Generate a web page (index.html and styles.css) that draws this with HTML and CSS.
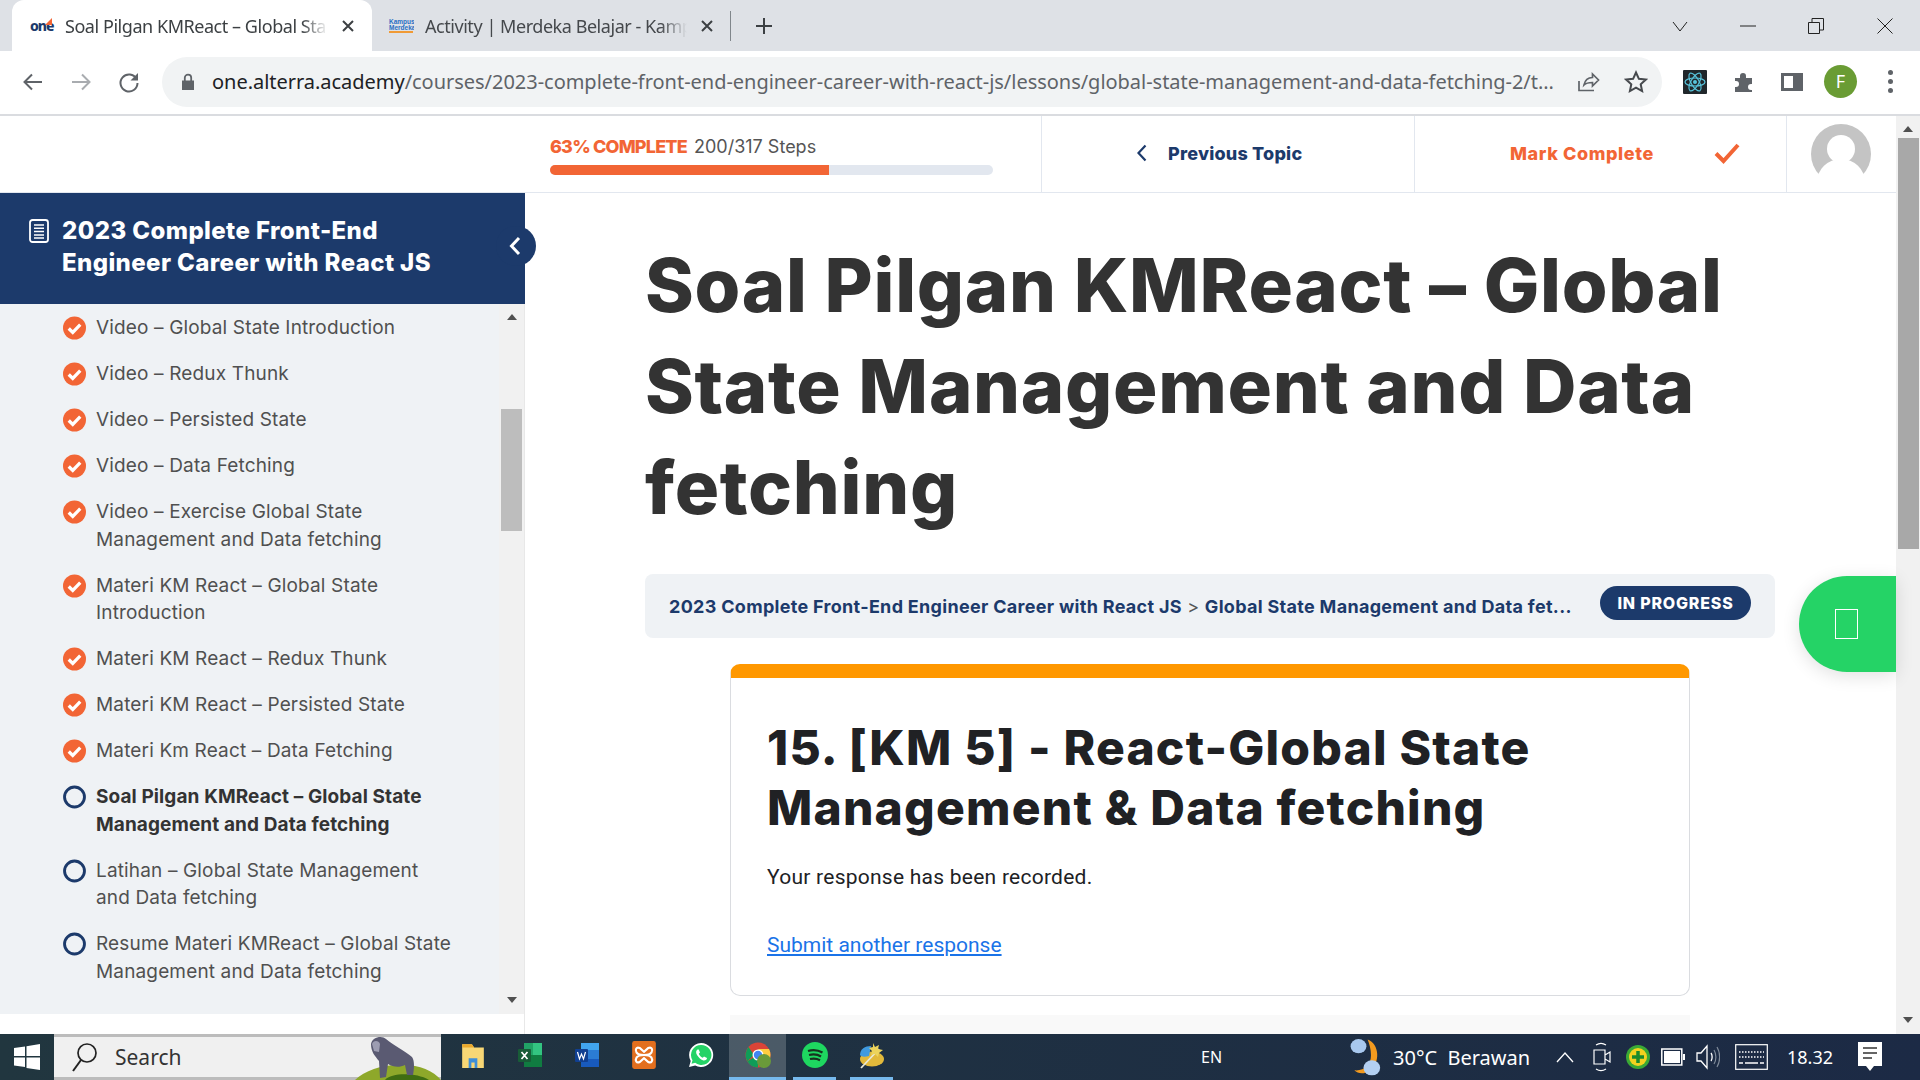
FILE: index.html
```html
<!DOCTYPE html>
<html lang="en">
<head>
<meta charset="UTF-8">
<title>Soal Pilgan KMReact – Global State Management and Data fetching</title>
<link rel="stylesheet" href="styles.css">
</head>
<body>
<svg class="defs" width="0" height="0">
    <symbol id="done" viewBox="0 0 24 24">
        <circle cx="12" cy="12" r="12" fill="#f26535"/>
        <path d="M6 12.500l4.200 4.200L18 8.600" fill="none" stroke="#fff" stroke-width="3.400"/>
    </symbol>
    <symbol id="todo" viewBox="0 0 24 24">
        <circle cx="12" cy="12" r="10.400" fill="none" stroke="#1c3a6b" stroke-width="3"/>
    </symbol>
</svg>

<!-- Browser tabs -->
<div class="tabstrip">
    <div class="tab active">
        <span class="favicon one">one</span>
        <span class="tab-title">Soal Pilgan KMReact – Global Sta</span>
        <svg class="tab-close" viewBox="0 0 12 12"><path d="M1 1l10 10M11 1L1 11"/></svg>
    </div>
    <div class="tab">
        <svg class="favicon-kampus" viewBox="0 0 26 16">
            <text x="1" y="6" class="kampus-text">Kampus</text>
            <text x="1" y="11.500" class="kampus-text">Merdeka</text>
            <rect x="1" y="13" width="24" height="2" fill="#f09a35"/>
        </svg>
        <span class="tab-title">Activity | Merdeka Belajar - Kamp</span>
        <svg class="tab-close" viewBox="0 0 12 12"><path d="M1 1l10 10M11 1L1 11"/></svg>
    </div>
    <div class="tab-sep"></div>
    <svg class="new-tab" viewBox="0 0 18 18"><path d="M9 1v16M1 9h16"/></svg>
    <div class="window-btns">
        <svg viewBox="0 0 16 16" class="win-chevron"><path d="M1 4l7 9 7-9"/></svg>
        <svg viewBox="0 0 16 16" class="win-min"><path d="M0 8h16"/></svg>
        <svg viewBox="0 0 16 16" class="win-restore"><path d="M.5 4.500h11v11H.5zM4 4.500V.5h11.500V12h-4"/></svg>
        <svg viewBox="0 0 16 16" class="win-close"><path d="M.5.5l15 15M15.500.5l-15 15"/></svg>
    </div>
</div>

<!-- Browser toolbar -->
<div class="toolbar">
    <svg class="nav-icon" viewBox="0 0 24 24"><path d="M21 12H4M11 4.500L3.500 12l7.500 7.500" stroke="#5f6368"/></svg>
    <svg class="nav-icon" viewBox="0 0 24 24"><path d="M3 12h17M13 4.500l7.500 7.500-7.500 7.500" stroke="#a9acb0"/></svg>
    <svg class="nav-icon" viewBox="0 0 24 24"><path d="M19.500 9A8.500 8.500 0 1 0 20.500 13" stroke="#5f6368"/><path d="M21 3v7.500h-7.500z" fill="#5f6368" stroke="none"/></svg>
    <div class="omnibox">
        <svg class="lock" viewBox="0 0 14 18"><path d="M1 7.500h12V17H1z" fill="#5f6368"/><path d="M3.800 8V4.800a3.200 3.200 0 0 1 6.400 0V8" fill="none" stroke="#5f6368" stroke-width="1.800"/></svg>
        <div class="url"><span class="host">one.alterra.academy</span>/courses/2023-complete-front-end-engineer-career-with-react-js/lessons/global-state-management-and-data-fetching-2/t...</div>
        <svg class="omni-icon share" viewBox="0 0 24 24"><path d="M3 11v9.500h15M8 15c1-5 4.500-7.500 8.500-7.500V4l6 6-6 6v-3.500C12.500 12.500 10 13 8 15z" fill="none" stroke="#5f6368" stroke-width="1.700"/></svg>
        <svg class="omni-icon" viewBox="0 0 24 24"><path d="M12 2.500l2.900 6.300 6.900.8-5.100 4.700 1.400 6.800-6.100-3.400-6.100 3.400 1.400-6.800L2.200 9.600l6.900-.8z" fill="none" stroke="#46494d" stroke-width="2"/></svg>
    </div>
    <div class="ext-icons">
        <svg class="ext-react" viewBox="0 0 24 24">
            <rect width="24" height="24" rx="1" fill="#20272b"/>
            <g fill="none" stroke="#58c4dc" stroke-width="1.200">
                <ellipse cx="12" cy="12" rx="10" ry="4"/>
                <ellipse cx="12" cy="12" rx="10" ry="4" transform="rotate(60 12 12)"/>
                <ellipse cx="12" cy="12" rx="10" ry="4" transform="rotate(120 12 12)"/>
            </g>
            <circle cx="12" cy="12" r="2" fill="#58c4dc"/>
        </svg>
        <svg class="ext-puzzle" viewBox="0 0 24 24"><path d="M2 8h5V6a3 3 0 0 1 6 0v2h6v6h-1a3 3 0 0 0 0 6h1v2H2v-5h1a3 3 0 0 0 0-6H2z" fill="#5f6368"/></svg>
        <svg class="ext-panel" viewBox="0 0 22 18"><path d="M0 0h22v18H0z" fill="#5f6368"/><path d="M3 3h9v12H3z" fill="#fff"/></svg>
        <div class="profile">F</div>
        <div class="kebab"><i></i><i></i><i></i></div>
    </div>
</div>

<!-- Page -->
<div class="page">
    <div class="page-left">
        <div class="topbar">
            <div class="progress">
                <div class="progress-text"><b>63% COMPLETE</b> 200/317 Steps</div>
                <div class="progress-track"><div class="progress-fill"></div></div>
            </div>
            <div class="prev-topic">
                <svg viewBox="0 0 10 18"><path d="M8.500 1.500L1.500 9l7 7.500"/></svg>
                <span>Previous Topic</span>
            </div>
            <div class="mark-complete">
                <span>Mark Complete</span>
                <svg viewBox="0 0 26 22"><path d="M2 11.500l7.500 7.500L24 3"/></svg>
            </div>
            <div class="avatar-cell">
                <svg viewBox="0 0 60 60">
                    <circle cx="30" cy="30" r="30" fill="#c4c4c4"/>
                    <ellipse cx="30" cy="58" rx="24" ry="23" fill="#fff"/>
                    <circle cx="30" cy="25" r="14" fill="#fff"/>
                </svg>
            </div>
        </div>

        <div class="body-row">
            <aside class="sidebar">
                <div class="course-head">
                    <svg class="course-icon" viewBox="0 0 20 24"><rect x="1" y="1" width="18" height="22" rx="2.500" fill="none" stroke="#fff" stroke-width="1.800"/><path d="M5 6h10M5 9.300h10M5 12.600h10M5 15.900h10M5 19h10" stroke="#fff" stroke-width="1.500"/></svg>
                    <div class="course-title">2023 Complete Front-End Engineer Career with React JS</div>
                    <div class="collapse-btn"><svg viewBox="0 0 12 20"><path d="M10 2L2.500 10l7.500 8"/></svg></div>
                </div>
                <div class="lesson-wrap">
                    <ul class="lessons">
                        <li><svg><use href="#done"/></svg><span>Video – Global State Introduction</span></li>
                        <li><svg><use href="#done"/></svg><span>Video – Redux Thunk</span></li>
                        <li><svg><use href="#done"/></svg><span>Video – Persisted State</span></li>
                        <li><svg><use href="#done"/></svg><span>Video – Data Fetching</span></li>
                        <li><svg><use href="#done"/></svg><span>Video – Exercise Global State Management and Data fetching</span></li>
                        <li><svg><use href="#done"/></svg><span>Materi KM React – Global State Introduction</span></li>
                        <li><svg><use href="#done"/></svg><span>Materi KM React – Redux Thunk</span></li>
                        <li><svg><use href="#done"/></svg><span>Materi KM React – Persisted State</span></li>
                        <li><svg><use href="#done"/></svg><span>Materi Km React – Data Fetching</span></li>
                        <li class="current"><svg><use href="#todo"/></svg><span>Soal Pilgan KMReact – Global State Management and Data fetching</span></li>
                        <li><svg><use href="#todo"/></svg><span>Latihan – Global State Management and Data fetching</span></li>
                        <li><svg><use href="#todo"/></svg><span>Resume Materi KMReact – Global State Management and Data fetching</span></li>
                    </ul>
                    <div class="list-scrollbar">
                        <div class="arrow-up"></div>
                        <div class="list-thumb"></div>
                        <div class="arrow-down"></div>
                    </div>
                </div>
            </aside>

            <main class="content">
                <h1>Soal Pilgan KMReact – Global State Management and Data fetching</h1>
                <div class="crumbs">
                    <div class="crumb-text"><b>2023 Complete Front-End Engineer Career with React JS</b> <i>&gt;</i> <b>Global State Management and Data fet...</b></div>
                    <div class="status-pill">IN PROGRESS</div>
                </div>
                <div class="form-card">
                    <h2>15. [KM 5] - React-Global State Management &amp; Data fetching</h2>
                    <p>Your response has been recorded.</p>
                    <a href="#">Submit another response</a>
                </div>
                <div class="next-card"></div>
            </main>
        </div>

        <div class="float-btn"><div class="tofu"></div></div>
    </div>

    <div class="page-scrollbar">
        <div class="arrow-up"></div>
        <div class="page-thumb"></div>
        <div class="arrow-down"></div>
    </div>
</div>

<!-- Windows taskbar -->
<div class="taskbar">
    <div class="start">
        <svg viewBox="0 0 26 26"><path d="M0 4l11-1.500V12H0zM12.500 2.200L26 0v12H12.500zM0 13.500h11V23L0 21.500zM12.500 13.500H26V26l-13.500-2z" fill="#fff"/></svg>
    </div>
    <div class="searchbox">
        <svg class="search-icon" viewBox="0 0 26 30"><circle cx="15" cy="11" r="9" fill="none" stroke="#222" stroke-width="1.700"/><path d="M9 18L1 29" stroke="#222" stroke-width="2"/></svg>
        <span>Search</span>
        <svg class="gorilla" viewBox="0 0 86 46">
            <path d="M0 46C10 36 30 30 45 31C62 30 78 36 86 46z" fill="#8ea82a"/>
            <path d="M30 46C36 39 60 38 74 46z" fill="#3f6d12"/>
            <path d="M16 10C17 3 27 1 31 5C38 11 50 17 57 23C60 27 59 36 58 41L52 41L50 31C44 34 38 33 33 30L31 43L25 44L24 27C20 22 16 18 16 10z" fill="#5a5a72"/>
            <path d="M17 10C18 6 24 6 25 10L24 18L19 17z" fill="#9d9db2"/>
        </svg>
    </div>
    <div class="task-icons">
        <div class="task-item">
            <svg viewBox="0 0 24 24"><path d="M2 2h9l2 3h9v19H2z" fill="#f8d775"/><path d="M2 2h9l2 3H2z" fill="#eaa82c"/><path d="M8 24v-9h8v9h-2.500v-5h-3v5z" fill="#3f8fd8"/></svg>
        </div>
        <div class="task-item">
            <svg viewBox="0 0 26 26"><path d="M7 1h18v24H7z" fill="#21a366"/><path d="M16 1h9v12h-9z" fill="#33c481"/><path d="M7 13h18v12H7z" fill="#107c41"/><rect x="1" y="7" width="13" height="13" rx="1" fill="#185c37"/><path d="M4.500 10l6 7M10.500 10l-6 7" stroke="#fff" stroke-width="1.700"/></svg>
        </div>
        <div class="task-item">
            <svg viewBox="0 0 26 26"><path d="M7 1h18v24H7z" fill="#2b7cd3"/><path d="M7 1h18v7H7z" fill="#41a5ee"/><path d="M7 17h18v8H7z" fill="#185abd"/><rect x="1" y="7" width="13" height="13" rx="1" fill="#103f91"/><path d="M3.500 10l2 7 2-5 2 5 2-7" fill="none" stroke="#fff" stroke-width="1.200"/></svg>
        </div>
        <div class="task-item">
            <svg viewBox="0 0 24 26"><rect x="1" y="0" width="22" height="26" rx="2" fill="#e36f1e"/><path d="M12 10L8 6.500C5 5 3.500 8 5 10.500 6 12 8 13 12 13s6 1 7 2.500c1.500 2.500 0 5.500-3 4L12 16l-4 3.500c-3 1.500-4.500-1.500-3-4C6 14 8 13 12 13s6-1 7-2.500C20.500 8 19 5 16 6.500z" fill="none" stroke="#fff" stroke-width="2"/></svg>
        </div>
        <div class="task-item">
            <svg viewBox="0 0 26 26"><path d="M13 1a12 12 0 0 0-10.300 18L1 25l6.200-1.600A12 12 0 1 0 13 1z" fill="#fff"/><path d="M13 3a10 10 0 0 0-8.500 15.200l-1 3.600 3.700-1A10 10 0 1 0 13 3z" fill="#25d366"/><path d="M9.500 7.500c-1.500 1-2 3-.5 5.500s4 5 6.500 5.500c2 .2 3.500-1 3.500-2.500l-3-1.500-1.200 1.300c-1.500-.5-3.500-2.500-4-4l1.200-1.200-1.300-3z" fill="#fff"/></svg>
        </div>
        <div class="task-item running selected">
            <svg viewBox="0 0 26 26"><circle cx="13" cy="13" r="12.500" fill="#db4437"/><path d="M13 13L2.200 19.300A12.500 12.500 0 0 0 13 25.500z" fill="#0f9d58"/><path d="M2.200 19.300A12.500 12.500 0 0 1 3.500 5L9 13z" fill="#0f9d58"/><path d="M13 7h11a12.500 12.500 0 0 1-8 18L19 13z" fill="#ffcd40"/><circle cx="13" cy="13" r="5.500" fill="#fff"/><circle cx="13" cy="13" r="4.200" fill="#4285f4"/><circle cx="19" cy="19" r="7" fill="#6a9a3a"/></svg>
        </div>
        <div class="task-item running">
            <svg viewBox="0 0 26 26"><circle cx="13" cy="13" r="13" fill="#1ed760"/><path d="M6 9c5-1.500 10-1 14.500 1.500M7 13c4-1 8.500-.7 12 1.500M8 17c3.500-.8 7-.5 10 1.200" fill="none" stroke="#17331f" stroke-width="2.200"/></svg>
        </div>
        <div class="task-item running">
            <svg viewBox="0 0 26 28"><ellipse cx="13" cy="18" rx="12" ry="7.500" fill="#e2b93b"/><path d="M1 14C1 8 6 5 12 5L10 15C6 16 2 16 1 14z" fill="#3f9ae0"/><path d="M2 27L20 8" stroke="#e8e8d8" stroke-width="1.800"/><path d="M14 2l2 4 4-2-1 4 5 1-4 3-1 4-3-3-4 1 1-4-3-3 4-1z" fill="#ecd35c"/></svg>
        </div>
    </div>
    <div class="lang">EN</div>
    <div class="tray">
        <svg class="weather" viewBox="0 0 38 48"><path d="M21 3c14 5 16 28 2 38-7 4-14 3-18-1 12 1 20-6 20-18 0-7-2-14-4-19z" fill="#f39a1f"/><ellipse cx="10" cy="11" rx="9.500" ry="8.500" fill="#a8c8ee"/><ellipse cx="26" cy="37" rx="10" ry="9" fill="#b4d0f2"/></svg>
        <div class="weather-text">30°C&nbsp; Berawan</div>
        <svg class="tray-chevron" viewBox="0 0 18 12"><path d="M1 11l8-9 8 9"/></svg>
        <svg class="tray-cam" viewBox="0 0 18 32"><path d="M1 9h11v14H1zM12 14l5-3v10l-5-3zM3 4c3-2 7-2 10 0M3 28c3 2 7 2 10 0"/></svg>
        <svg class="tray-360" viewBox="0 0 24 24"><circle cx="12" cy="12" r="12" fill="#3aa935"/><circle cx="12" cy="12" r="9" fill="#f3d21f"/><path d="M12 6v12M6 12h12" stroke="#1b8a2c" stroke-width="3.500"/></svg>
        <svg class="tray-battery" viewBox="0 0 24 18"><path d="M.8 1h20v16H.8z" fill="none" stroke="#fff" stroke-width="1.500"/><path d="M3 3h16v12H3z" fill="#fff"/><path d="M22 6h2v6h-2z" fill="#fff"/></svg>
        <svg class="tray-volume" viewBox="0 0 24 26"><path d="M1 9h4l6-7v22l-6-7H1zM15 9c1.500 2 1.500 6 0 8" fill="none" stroke="#fff" stroke-width="1.300"/><path d="M18 6c2.500 4 2.500 10 0 14M21 3c3.500 6 3.500 14 0 20" fill="none" stroke="#7f8a99" stroke-width="1.200"/></svg>
        <svg class="tray-keyboard" viewBox="0 0 33 26"><rect x=".7" y=".7" width="31.600" height="24.600" fill="none" stroke="#fff" stroke-width="1.200"/><path d="M4 8h25M4 13h25" stroke="#fff" stroke-width="1.500" stroke-dasharray="1.500 1.500"/><path d="M4 19h4M10 19h13M25 19h4" stroke="#fff" stroke-width="1.500"/></svg>
        <div class="clock">18.32</div>
        <svg class="tray-notif" viewBox="0 0 24 30"><path d="M0 0h24v24h-8l-4 5-4-5H0z" fill="#fff"/><path d="M5 6h14M5 11h14M5 16h9" stroke="#333" stroke-width="1.300"/></svg>
    </div>
</div>
</body>
</html>
```

FILE: styles.css
```css
* {
    box-sizing: border-box;
}
html, body {
    height: 100%;
}
body {
    margin: 0;
    height: 1080px;
    overflow: hidden;
    display: flex;
    flex-direction: column;
    font-family: "Inter", "Liberation Sans", sans-serif;
    background-color: #fff;
    color: #333;
}
.defs {
    position: absolute;
}

/* Browser tabs */
.tabstrip {
    height: 51px;
    flex: none;
    display: flex;
    align-items: center;
    padding-left: 12px;
    background-color: #dee1e6;
    font-family: "Noto Sans", sans-serif;
    font-size: 18px;
    color: #45484c;
}
.tab {
    width: 360px;
    height: 51px;
    display: flex;
    align-items: center;
    padding-left: 18px;
}
.tab + .tab {
    padding-left: 16px;
    width: 354px;
}
.tab + .tab .tab-close {
    margin-right: 13px;
}
.tab.active {
    background-color: #fff;
    border-radius: 12px 12px 0 0;
    color: #3c4043;
}
.favicon {
    width: 24px;
    flex: none;
}
.favicon.one {
    position: relative;
    font-size: 14px;
    font-weight: 800;
    letter-spacing: -1px;
    color: #1c3a6b;
}
.favicon.one::after {
    content: "";
    position: absolute;
    right: 2px;
    top: 2px;
    border-left: 7px solid transparent;
    border-bottom: 7px solid #f26535;
}
.favicon-kampus {
    width: 26px;
    height: 16px;
    flex: none;
}
.kampus-text {
    font-family: "Liberation Sans", sans-serif;
    font-size: 6.500px;
    font-weight: 700;
    fill: #2a6fc4;
}
.tab-title {
    margin-left: 11px;
    flex: 1;
    min-width: 0;
    white-space: nowrap;
    letter-spacing: -0.45px;
    -webkit-mask-image: linear-gradient(to right, #000 90%, transparent 100%);
    mask-image: linear-gradient(to right, #000 90%, transparent 100%);
}
.tab-close {
    width: 12px;
    height: 12px;
    flex: none;
    margin: 0 18px 0 14px;
    fill: none;
    stroke: #3c4043;
    stroke-width: 2;
}
.tab-sep {
    width: 1px;
    height: 30px;
    background-color: #80868b;
    margin-left: 4px;
}
.new-tab {
    width: 18px;
    height: 18px;
    margin-left: 24px;
    fill: none;
    stroke: #3c4043;
    stroke-width: 2;
}
.window-btns {
    margin-left: auto;
    display: flex;
    align-items: center;
    fill: none;
    stroke: #222;
    stroke-width: 1;
}
.window-btns svg {
    width: 16px;
    height: 16px;
}
.win-chevron {
    margin-right: 52px;
}
.win-min {
    margin-right: 52px;
}
.win-restore {
    margin-right: 53px;
}
.win-close {
    margin-right: 27px;
}

/* Browser toolbar */
.toolbar {
    height: 65px;
    flex: none;
    display: flex;
    align-items: center;
    padding: 0 0 2px 21px;
    border-bottom: 2px solid #dadce0;
}
.nav-icon {
    width: 24px;
    height: 24px;
    margin-right: 24px;
    fill: none;
    stroke-width: 2;
}
.omnibox {
    width: 1500px;
    height: 50px;
    margin-left: -3px;
    display: flex;
    align-items: center;
    padding: 0 14px 0 19px;
    background-color: #f1f3f4;
    border-radius: 25px;
}
.lock {
    width: 14px;
    height: 18px;
    flex: none;
}
.url {
    margin-left: 17px;
    flex: 1;
    min-width: 0;
    white-space: nowrap;
    font-family: "Noto Sans", sans-serif;
    font-size: 20px;
    letter-spacing: -0.03px;
    color: #5f6368;
}
.host {
    color: #202124;
}
.omni-icon {
    width: 24px;
    height: 24px;
    flex: none;
    margin-left: 24px;
}
.omni-icon.share {
    margin-left: 16px;
}
.ext-icons {
    display: flex;
    align-items: center;
    margin-left: 21px;
}
.ext-react {
    width: 24px;
    height: 24px;
}
.ext-puzzle {
    width: 24px;
    height: 24px;
    margin-left: 26px;
}
.ext-panel {
    width: 22px;
    height: 18px;
    margin-left: 24px;
}
.profile {
    width: 33px;
    height: 33px;
    margin-left: 21px;
    border-radius: 50%;
    background-color: #6a9c34;
    color: #fff;
    font-family: "Noto Sans", sans-serif;
    font-size: 18px;
    line-height: 33px;
    text-align: center;
}
.kebab {
    margin-left: 31px;
    display: flex;
    flex-direction: column;
    gap: 4px;
}
.kebab i {
    width: 5px;
    height: 5px;
    border-radius: 50%;
    background-color: #5f6368;
}

/* Page */
.page {
    flex: 1;
    min-height: 0;
    display: flex;
}
.page-left {
    flex: 1;
    min-width: 0;
    position: relative;
    display: flex;
    flex-direction: column;
}
.topbar {
    height: 77px;
    flex: none;
    display: flex;
    padding-left: 550px;
    border-bottom: 1px solid #e2e7ef;
}
.progress {
    width: 491px;
    padding-top: 20px;
}
.progress-text {
    font-size: 18px;
    line-height: 22px;
    color: #555;
}
.progress-text b {
    color: #f26535;
    font-weight: 800;
    letter-spacing: -0.8px;
    margin-right: 2px;
}
.progress-track {
    width: 443px;
    height: 10px;
    margin-top: 7px;
    background-color: #e2e7ef;
    border-radius: 5px;
    overflow: hidden;
}
.progress-fill {
    width: 63%;
    height: 100%;
    background-color: #f26535;
}
.prev-topic {
    width: 373px;
    display: flex;
    align-items: center;
    padding: 0 0 2px 95px;
    border-left: 1px solid #e2e7ef;
    color: #1c3a6b;
    font-size: 18px;
    font-weight: 800;
    letter-spacing: 0.2px;
}
.prev-topic svg {
    width: 10px;
    height: 18px;
    margin-right: 21px;
    fill: none;
    stroke: #1c3a6b;
    stroke-width: 2.200;
}
.mark-complete {
    width: 372px;
    display: flex;
    align-items: center;
    padding: 0 0 2px 95px;
    border-left: 1px solid #e2e7ef;
    color: #f26535;
    font-size: 18px;
    font-weight: 800;
    letter-spacing: 0.6px;
}
.mark-complete span {
    width: 204px;
}
.mark-complete svg {
    width: 26px;
    height: 22px;
    fill: none;
    stroke: #f26535;
    stroke-width: 4;
}
.avatar-cell {
    width: 110px;
    padding: 8px 0 0 24px;
    border-left: 1px solid #e2e7ef;
}
.avatar-cell svg {
    width: 60px;
    height: 60px;
}

.body-row {
    flex: 1;
    min-height: 0;
    display: flex;
}

/* Sidebar */
.sidebar {
    width: 525px;
    flex: none;
    border-right: 1px solid #e8e8e8;
    padding-bottom: 20px;
    display: flex;
    flex-direction: column;
}
.course-head {
    height: 111px;
    flex: none;
    position: relative;
    display: flex;
    padding: 22px 60px 0 29px;
    background-color: #1c3a6b;
    margin-right: -1px;
}
.course-icon {
    width: 20px;
    height: 24px;
    flex: none;
    margin-top: 4px;
}
.course-title {
    margin-left: 13px;
    font-size: 24px;
    line-height: 32px;
    font-weight: 800;
    letter-spacing: 0.4px;
    color: #fff;
}
.collapse-btn {
    position: absolute;
    right: -11px;
    top: 33px;
    width: 40px;
    height: 40px;
    padding-right: 3px;
    border-radius: 50%;
    background-color: #1c3a6b;
    display: flex;
    align-items: center;
    justify-content: center;
}
.collapse-btn svg {
    width: 12px;
    height: 20px;
    fill: none;
    stroke: #fff;
    stroke-width: 3;
}
.lesson-wrap {
    flex: 1;
    min-height: 0;
    display: flex;
    background-color: #eff2f5;
}
.lessons {
    flex: 1;
    min-width: 0;
    margin: 0;
    padding: 1px 42px 0 63px;
    list-style: none;
    overflow: hidden;
}
.lessons li {
    display: flex;
    padding: 9.250px 0;
    font-size: 19px;
    line-height: 27.500px;
    color: #505050;
    letter-spacing: 0.15px;
}
.lessons li svg {
    width: 23px;
    height: 24px;
    flex: none;
    margin: 2px 10px 0 0;
}
.lessons li.current {
    font-weight: 700;
    color: #333;
    letter-spacing: 0.1px;
}
.list-scrollbar {
    width: 25px;
    flex: none;
    position: relative;
    background-color: #f1f1f1;
    display: flex;
    flex-direction: column;
    align-items: center;
}
.list-thumb {
    width: 21px;
    height: 122px;
    margin-top: 89px;
    background-color: #bdbdbd;
}
.arrow-up, .arrow-down {
    width: 0;
    height: 0;
    flex: none;
    border-left: 5px solid transparent;
    border-right: 5px solid transparent;
}
.arrow-up {
    margin-top: 10px;
    border-bottom: 6px solid #505050;
}
.arrow-down {
    margin-top: auto;
    margin-bottom: 11px;
    border-top: 6px solid #505050;
}

/* Main content */
.content {
    flex: 1;
    min-width: 0;
    overflow: hidden;
    padding: 42px 0 0 120px;
}
h1 {
    margin: 0;
    width: 1120px;
    font-size: 74px;
    line-height: 101px;
    font-weight: 800;
    letter-spacing: 0.7px;
    color: #333;
}
.crumbs {
    width: 1130px;
    height: 64px;
    margin-top: 36px;
    display: flex;
    align-items: center;
    justify-content: space-between;
    padding: 0 24px 6px 24px;
    background-color: #eff2f5;
    border-radius: 8px;
}
.crumb-text {
    font-size: 18px;
    white-space: nowrap;
    color: #1c3a6b;
    letter-spacing: 0.3px;
    padding-top: 6px;
}
.crumb-text b {
    font-weight: 700;
}
.crumb-text i {
    font-style: normal;
    color: #555;
}
.status-pill {
    width: 151px;
    height: 34px;
    flex: none;
    border-radius: 17px;
    background-color: #1c3a6b;
    color: #fff;
    font-size: 16px;
    font-weight: 800;
    line-height: 34px;
    text-align: center;
    letter-spacing: 0.8px;
}
.form-card {
    width: 960px;
    height: 332px;
    margin: 26px 0 0 85px;
    padding: 40px 36px 0;
    background-color: #fff;
    border: 1px solid #dadce0;
    border-top: 14px solid #ff9800;
    border-radius: 10px;
}
h2 {
    margin: 0;
    font-size: 48px;
    line-height: 60px;
    font-weight: 800;
    letter-spacing: 1.2px;
    color: #202124;
}
.form-card p {
    margin: 27px 0 0;
    font-family: "Roboto", sans-serif;
    font-size: 21px;
    line-height: 24px;
    letter-spacing: 0.25px;
    color: #202124;
}
.form-card a {
    display: inline-block;
    margin-top: 44px;
    font-family: "Roboto", sans-serif;
    font-size: 21px;
    line-height: 24px;
    color: #1a73e8;
}
.next-card {
    width: 960px;
    height: 60px;
    margin: 19px 0 0 85px;
    background-color: #f9f9f9;
}

/* Floating chat button */
.float-btn {
    position: absolute;
    right: 0;
    top: 460px;
    width: 97px;
    height: 96px;
    border-radius: 48px 0 0 48px;
    background-color: #25d366;
    box-shadow: 0 4px 18px rgba(0, 0, 0, 0.12);
    display: flex;
    align-items: center;
    padding-left: 36px;
}
.tofu {
    width: 23px;
    height: 30px;
    border: 1.500px solid #fff;
}

.page-scrollbar {
    width: 24px;
    flex: none;
    background-color: #f1f1f1;
    display: flex;
    flex-direction: column;
    align-items: center;
}
.page-thumb {
    width: 21px;
    height: 411px;
    margin-top: 6px;
    background-color: #a8a8a8;
}

/* Taskbar */
.taskbar {
    height: 46px;
    flex: none;
    display: flex;
    align-items: center;
    background: linear-gradient(to right, #21363f, #1c2a45);
    color: #fff;
    font-family: "Noto Sans", sans-serif;
}
.start {
    width: 54px;
    height: 46px;
    display: flex;
    align-items: center;
    justify-content: center;
}
.start svg {
    width: 26px;
    height: 26px;
}
.searchbox {
    width: 387px;
    height: 46px;
    position: relative;
    display: flex;
    align-items: center;
    padding-left: 18px;
    background-color: #f0f0f0;
    border-top: 3px solid #bcbcbc;
    border-bottom: 3px solid #bcbcbc;
    color: #333;
    font-size: 21px;
}
.search-icon {
    width: 26px;
    height: 30px;
    flex: none;
    margin-right: 17px;
}
.gorilla {
    position: absolute;
    right: 0;
    top: -3px;
    width: 86px;
    height: 46px;
}
.task-icons {
    display: flex;
    margin-left: 3px;
}
.task-item {
    width: 57px;
    height: 46px;
    display: flex;
    align-items: center;
    justify-content: center;
    position: relative;
    padding-bottom: 4px;
}
.task-item svg {
    width: 26px;
    height: 28px;
}
.task-item.running::after {
    content: "";
    position: absolute;
    left: 7px;
    right: 7px;
    bottom: 0;
    height: 3px;
    background-color: #76b9ed;
}
.task-item.selected {
    background-color: rgba(255, 255, 255, 0.2);
}
.task-item.selected::after {
    left: 0;
    right: 0;
}
.lang {
    margin-left: 301px;
    font-size: 16px;
}
.tray {
    margin-left: auto;
    display: flex;
    align-items: center;
}
.weather {
    width: 38px;
    height: 40px;
    flex: none;
}
.weather-text {
    margin-left: 8px;
    width: 163px;
    font-size: 20px;
    white-space: nowrap;
}
.tray-chevron {
    width: 18px;
    height: 12px;
    fill: none;
    stroke: #fff;
    stroke-width: 1.300;
}
.tray-cam {
    width: 18px;
    height: 32px;
    margin-left: 19px;
    fill: none;
    stroke: #fff;
    stroke-width: 1.200;
}
.tray-360 {
    width: 24px;
    height: 24px;
    margin-left: 15px;
}
.tray-battery {
    width: 24px;
    height: 18px;
    margin-left: 11px;
}
.tray-volume {
    width: 24px;
    height: 26px;
    margin-left: 11px;
}
.tray-keyboard {
    width: 33px;
    height: 26px;
    margin-left: 15px;
}
.clock {
    margin-left: 19px;
    font-size: 18px;
    width: 44px;
}
.tray-notif {
    width: 24px;
    height: 30px;
    margin: 0 38px 0 27px;
}
```
